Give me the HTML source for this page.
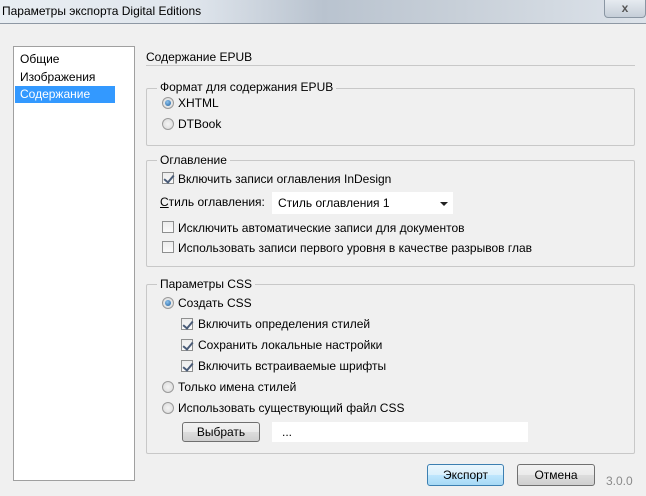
<!DOCTYPE html>
<html><head><meta charset="utf-8"><style>
*{margin:0;padding:0;box-sizing:border-box}
body{width:646px;height:496px;background:#f0f0f0;font:12px "Liberation Sans",sans-serif;color:#000;position:relative;overflow:hidden}
.a{position:absolute;white-space:nowrap}
.title{left:0;top:0;width:646px;height:24px;background:linear-gradient(90deg,#e9eef3 0%,#dfe5ec 30%,#b9c3cf 50%,#c7cfd8 70%,#dde3ea 100%);border-bottom:1px solid #8e98a4}
.grp{position:absolute;border:1px solid #c8c8c8;border-radius:2px}
.leg{position:absolute;background:#f0f0f0;padding:0 3px;line-height:13px}
.rb{position:absolute;width:12px;height:12px;border-radius:50%;border:1px solid #9a9a9a;background:radial-gradient(circle,#f4f4f4,#d8d8d8)}
.rb.on::after{content:"";position:absolute;left:2px;top:2px;width:6px;height:6px;border-radius:50%;background:radial-gradient(circle at 40% 35%,#8fc3ee,#1c5f9e)}
.cb{position:absolute;width:12px;height:12px;border:1px solid #8e8f8f;background:linear-gradient(#ececec,#fafafa)}
.cb.on::after{content:"";position:absolute;left:3px;top:0px;width:4px;height:8px;border:solid #4a5c78;border-width:0 2px 2px 0;transform:rotate(40deg)}
.btn{position:absolute;border:1px solid #707070;border-radius:3px;background:linear-gradient(#f2f2f2 0%,#ebebeb 50%,#dddddd 51%,#cfcfcf 100%);text-align:center;line-height:19px}
</style></head><body>
<div class="a title"></div>
<div class="a" style="left:2px;top:4px;font-size:12px">Параметры экспорта Digital Editions</div>
<div class="a" style="left:604px;top:0;width:42px;height:18px;border:1px solid #8a96a3;border-top:none;border-radius:0 0 4px 4px;background:linear-gradient(#e6ebf0,#c5ced8);text-align:center;font-weight:bold;color:#555;line-height:16px">x</div>

<div class="a" style="left:13px;top:46px;width:122px;height:435px;background:#fff;border:1px solid #a0a0a0"></div>
<div class="a" style="left:20px;top:52px">Общие</div>
<div class="a" style="left:20px;top:70px">Изображения</div>
<div class="a" style="left:15px;top:86px;width:100px;height:17px;background:#3399ff;color:#fff;padding-left:5px;line-height:17px">Содержание</div>

<div class="a" style="left:146px;top:50px">Содержание EPUB</div>
<div class="a" style="left:146px;top:65px;width:489px;height:1px;background:#c8c8c8"></div>

<div class="grp" style="left:146px;top:88px;width:489px;height:58px"></div>
<div class="leg" style="left:157px;top:81px">Формат для содержания EPUB</div>
<div class="rb on" style="left:162px;top:97px"></div><div class="a" style="left:178px;top:96px">XHTML</div>
<div class="rb" style="left:162px;top:118px"></div><div class="a" style="left:178px;top:117px">DTBook</div>

<div class="grp" style="left:146px;top:160px;width:489px;height:107px"></div>
<div class="leg" style="left:157px;top:154px">Оглавление</div>
<div class="cb on" style="left:162px;top:172px"></div><div class="a" style="left:178px;top:172px">Включить записи оглавления InDesign</div>
<div class="a" style="left:160px;top:195px"><u>С</u>тиль оглавления:</div>
<div class="a" style="left:272px;top:192px;width:181px;height:22px;background:#fff;padding:4px 0 0 6px">Стиль оглавления 1</div>
<div class="a" style="left:440px;top:202px;width:0;height:0;border:4px solid transparent;border-top:4px solid #222;border-bottom:0"></div>
<div class="cb" style="left:162px;top:221px"></div><div class="a" style="left:178px;top:221px">Исключить автоматические записи для документов</div>
<div class="cb" style="left:162px;top:241px"></div><div class="a" style="left:178px;top:241px">Использовать записи первого уровня в качестве разрывов глав</div>

<div class="grp" style="left:146px;top:284px;width:489px;height:170px"></div>
<div class="leg" style="left:157px;top:278px">Параметры CSS</div>
<div class="rb on" style="left:162px;top:297px"></div><div class="a" style="left:178px;top:296px">Создать CSS</div>
<div class="cb on" style="left:181px;top:318px"></div><div class="a" style="left:198px;top:317px">Включить определения стилей</div>
<div class="cb on" style="left:181px;top:339px"></div><div class="a" style="left:198px;top:338px">Сохранить локальные настройки</div>
<div class="cb on" style="left:181px;top:360px"></div><div class="a" style="left:198px;top:359px">Включить встраиваемые шрифты</div>
<div class="rb" style="left:162px;top:381px"></div><div class="a" style="left:178px;top:380px">Только имена стилей</div>
<div class="rb" style="left:162px;top:402px"></div><div class="a" style="left:178px;top:401px">Использовать существующий файл CSS</div>
<div class="btn" style="left:182px;top:422px;width:78px;height:20px">Выбрать</div>
<div class="a" style="left:272px;top:422px;width:256px;height:20px;background:#fff;padding:3px 0 0 10px">...</div>

<div class="btn" style="left:427px;top:464px;width:77px;height:22px;border-color:#3c7fb1;line-height:20px;background:linear-gradient(#eaf6fd 0%,#d9f0fc 50%,#bee6fd 51%,#a7d9f5 100%)">Экспорт</div>
<div class="btn" style="left:517px;top:464px;width:78px;height:22px;line-height:20px">Отмена</div>
<div class="a" style="left:606px;top:474px;color:#8a8a8a">3.0.0</div>
</body></html>
